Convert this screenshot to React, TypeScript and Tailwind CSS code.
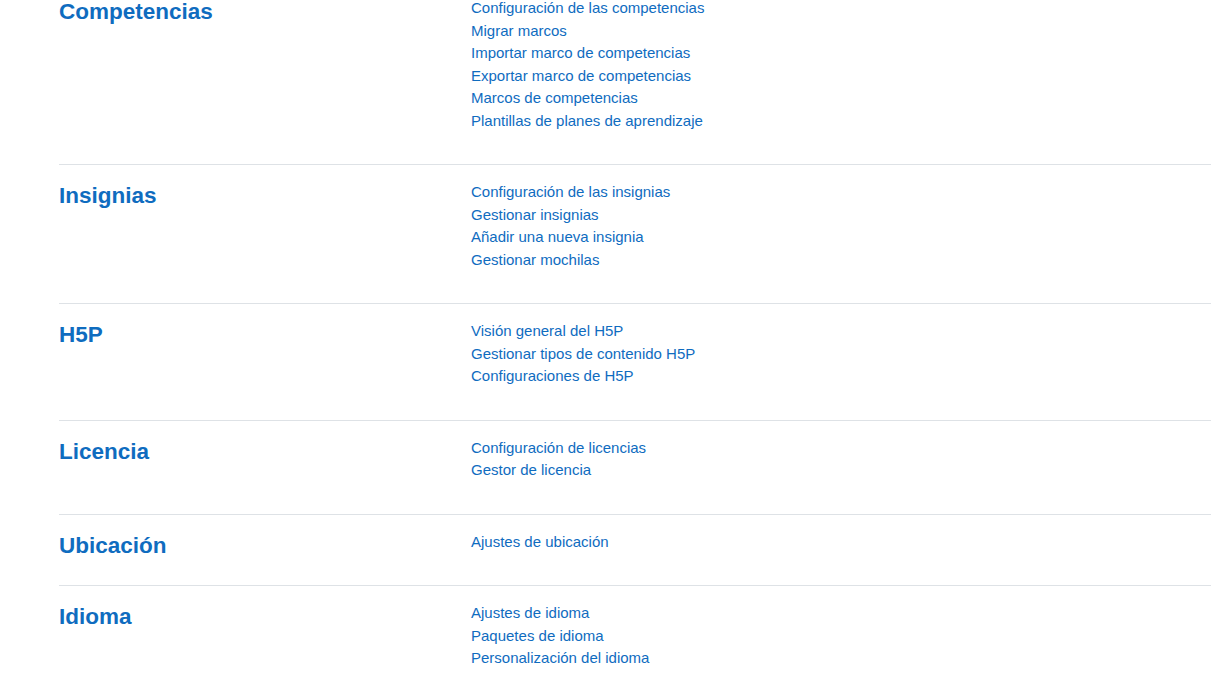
const sections: { title: string; links: string[] }[] = [
  {
    title: 'Competencias',
    links: [
      'Configuración de las competencias',
      'Migrar marcos',
      'Importar marco de competencias',
      'Exportar marco de competencias',
      'Marcos de competencias',
      'Plantillas de planes de aprendizaje',
    ],
  },
  {
    title: 'Insignias',
    links: [
      'Configuración de las insignias',
      'Gestionar insignias',
      'Añadir una nueva insignia',
      'Gestionar mochilas',
    ],
  },
  {
    title: 'H5P',
    links: [
      'Visión general del H5P',
      'Gestionar tipos de contenido H5P',
      'Configuraciones de H5P',
    ],
  },
  {
    title: 'Licencia',
    links: ['Configuración de licencias', 'Gestor de licencia'],
  },
  {
    title: 'Ubicación',
    links: ['Ajustes de ubicación'],
  },
  {
    title: 'Idioma',
    links: ['Ajustes de idioma', 'Paquetes de idioma', 'Personalización del idioma'],
  },
];

export default function App() {
  return (
    <div className="min-h-[687px] w-[1211px] overflow-hidden bg-white font-['Liberation_Sans',Arial,sans-serif] text-[15px] leading-[22.5px] text-[#1d2125]">
      <div className="-mt-[3px] pl-[59px]">
        {sections.map((s, i) => (
          <div key={s.title}>
            {i > 0 && <hr className="my-4 border-0 border-t border-[#dee2e6]" />}
            <div className="grid grid-cols-[412px_1fr]">
              <h3 className="mt-px mb-2 text-[22.5px] font-bold leading-[27px] text-[#0f6cbf]">
                {s.title}
              </h3>
              <ul className="mb-4">
                {s.links.map((l) => (
                  <li key={l}>
                    <a href="#" className="text-[#0f6cbf]">
                      {l}
                    </a>
                  </li>
                ))}
              </ul>
            </div>
          </div>
        ))}
      </div>
    </div>
  );
}
